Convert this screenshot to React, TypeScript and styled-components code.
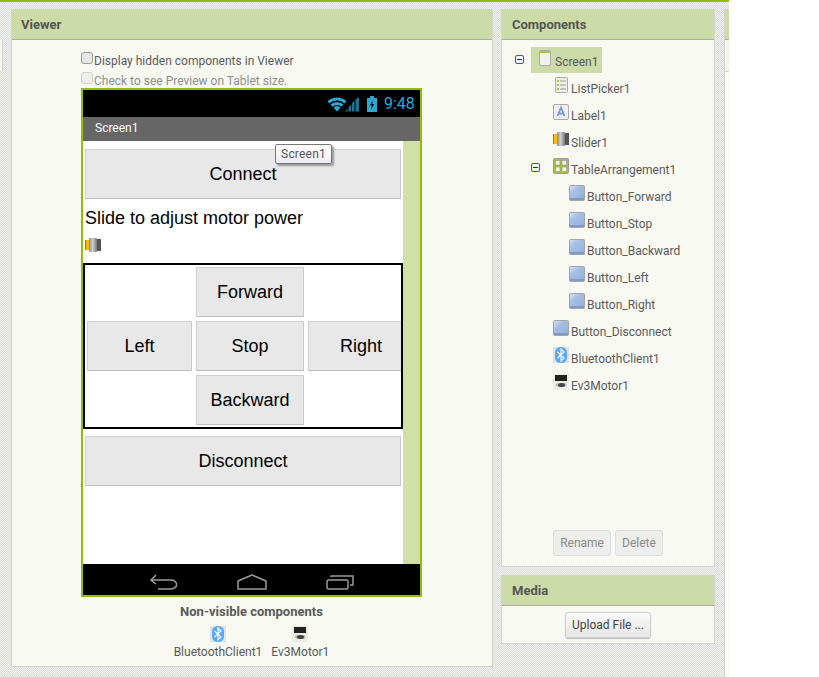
import React from "react";
import styled, { createGlobalStyle } from "styled-components";

const Global = createGlobalStyle`
  html, body { margin: 0; padding: 0; background: #fff; }
  body { font-family: Roboto, "Liberation Sans", sans-serif; overflow: hidden; }
`;

const Page = styled.div`
  width: 819px;
  height: 677px;
  overflow: hidden;
  background: #fff;
`;

const Workspace = styled.div`
  width: 729px;
  height: 677px;
  box-sizing: border-box;
  border-top: 2px solid #8fbf00;
  padding: 7px 0 0 0;
  display: flex;
  align-items: flex-start;
  gap: 8px;
  background-color: #f0f0ee;
  background-image: repeating-conic-gradient(#dcdcda 0 25%, #f1f1ef 0 50%);
  background-size: 2px 2px;
`;

const LeftEdge = styled.div`
  width: 3px;
  height: 31px;
  margin-top: 31px;
  flex: none;
  box-sizing: border-box;
  background: #f8f9f3;
  border-right: 1px solid #d4d4d0;
`;

const Panel = styled.section<{ $h: number; $w?: number }>`
  width: ${(p) => p.$w ?? 214}px;
  height: ${(p) => p.$h}px;
  flex: none;
  box-sizing: border-box;
  background: #f8f9f3;
  border: 1px solid #d4d4d0;
  border-top: none;
  display: flex;
  flex-direction: column;
`;

const PanelHeader = styled.h2<{ $inset?: number }>`
  margin: 0;
  height: 31px;
  flex: none;
  box-sizing: border-box;
  padding: 1px 0 0 ${(p) => p.$inset ?? 10}px;
  display: flex;
  align-items: center;
  background: #cddba9;
  border-bottom: 1px solid #a9b0a0;
  font-size: 13px;
  font-weight: 700;
  color: #555;
`;

const ViewerBody = styled.div`
  flex: 1;
  padding: 10px 0 0 69px;
  display: flex;
  flex-direction: column;
  width: 342px;
`;

const CheckRow = styled.label<{ $disabled?: boolean }>`
  display: flex;
  align-items: flex-start;
  height: 20px;
  font-size: 12px;
  line-height: 22px;
  color: ${(p) => (p.$disabled ? "#8e8e8e" : "#5a5a5a")};
`;

const CheckBox = styled.span<{ $disabled?: boolean }>`
  width: 12px;
  height: 12px;
  box-sizing: border-box;
  margin: 2px 1px 0 0;
  border: 1px solid ${(p) => (p.$disabled ? "#d0d0d0" : "#9a9a9a")};
  border-radius: 3px;
  background: ${(p) => (p.$disabled ? "#eeeeea" : "#e6e6e6")};
`;

const Phone = styled.div`
  position: relative;
  margin-top: -2px;
  width: 341px;
  height: 509px;
  box-sizing: border-box;
  border: 2px solid #8fbf00;
  display: flex;
  flex-direction: column;
  background: #fff;
`;

const StatusBar = styled.div`
  height: 27px;
  flex: none;
  box-sizing: border-box;
  background: #000;
  display: flex;
  align-items: center;
  justify-content: flex-end;
  padding-right: 6px;
  color: #2ea6d4;
  font-size: 16px;
  font-weight: 400;
`;

const StatusTime = styled.span`
  margin-left: 7px;
  width: 30px;
  text-align: right;
`;

const SignalWrap = styled.span`
  display: flex;
  margin-right: 7px;
`;

const TitleBar = styled.div`
  height: 24px;
  flex: none;
  box-sizing: border-box;
  background: #666;
  color: #fff;
  font-size: 12px;
  font-weight: 400;
  padding: 0 0 2px 12px;
  display: flex;
  align-items: center;
`;

const PhoneBody = styled.div`
  flex: 1;
  display: flex;
  min-height: 0;
`;

const Form = styled.div`
  width: 320px;
  flex: none;
  box-sizing: border-box;
  padding: 8px 2px 0;
  display: flex;
  flex-direction: column;
  font-family: "Liberation Sans", Arial, sans-serif;
  color: #000;
`;

const FormSide = styled.div`
  flex: 1;
  background: #d3e0a5;
`;

const PhoneButton = styled.div`
  height: 50px;
  box-sizing: border-box;
  background: #e8e8e8;
  border: 1px solid #d0d0d0;
  border-bottom-color: #bdbdbd;
  border-right-color: #c8c8c8;
  display: flex;
  align-items: center;
  justify-content: center;
  font-size: 18px;
  white-space: nowrap;
`;

const FormLabel = styled.div`
  margin-top: 8px;
  font-size: 18px;
  line-height: 22px;
`;

const SliderSlot = styled.div`
  display: flex;
  align-items: center;
  height: 32px;
`;

const Table = styled.div`
  margin: 2px -2px 7px;
  box-sizing: border-box;
  width: 320px;
  height: 166px;
  border: 2px solid #000;
  padding: 2px 0 2px 2px;
  display: grid;
  grid-template-columns: 105px 108px 106px;
  grid-template-rows: repeat(3, 50px);
  gap: 4px;
  overflow: hidden;
`;

const Cell = styled(PhoneButton)<{ $col: number; $row: number }>`
  grid-column: ${(p) => p.$col};
  grid-row: ${(p) => p.$row};
`;

const NavBar = styled.div`
  height: 31px;
  flex: none;
  box-sizing: border-box;
  background: #000;
  display: flex;
  align-items: center;
  padding: 4px 0 0 67px;
  gap: 59px;
`;

const NonVisible = styled.div`
  width: 341px;
  display: flex;
  flex-direction: column;
  align-items: center;
  padding-top: 8px;
  color: #5a5a5a;
`;

const NonVisibleTitle = styled.div`
  font-size: 13px;
  font-weight: 700;
  line-height: 14px;
`;

const NonVisibleList = styled.div`
  display: flex;
  gap: 9px;
  margin-top: 7px;
  font-size: 12px;
`;

const NonVisibleItem = styled.div`
  display: flex;
  flex-direction: column;
  align-items: center;
  line-height: 14px;
  gap: 3px;
`;

const RightColumn = styled.div`
  display: flex;
  flex-direction: column;
  gap: 8px;
  flex: none;
`;

const Tree = styled.div`
  flex: 1;
  padding-top: 7px;
`;

const TreeRow = styled.div<{ $depth: number }>`
  height: 27px;
  box-sizing: border-box;
  padding-left: ${(p) => 13 + p.$depth * 16}px;
  display: flex;
  align-items: flex-start;
`;

const ToggleSlot = styled.span`
  width: 16px;
  flex: none;
  height: 24px;
  display: flex;
  align-items: center;
`;

const Toggle = styled.span`
  width: 9px;
  height: 9px;
  box-sizing: border-box;
  border: 1px solid #3a50d0;
  border-radius: 2px;
  background: #f4f6ff;
  position: relative;
  &::after {
    content: "";
    position: absolute;
    left: 1px;
    right: 1px;
    top: 3px;
    height: 1px;
    background: #1c2a8c;
  }
`;

const TreeItem = styled.div<{ $selected?: boolean }>`
  height: 26px;
  box-sizing: border-box;
  padding: 3px 4px 0 6px;
  display: flex;
  align-items: flex-start;
  gap: 2px;
  background: ${(p) => (p.$selected ? "#cddba9" : "transparent")};
  font-size: 12px;
  line-height: 16px;
  color: #5a5a5a;
`;

const TreeText = styled.span`
  padding-top: 4px;
`;

const Actions = styled.div`
  display: flex;
  justify-content: center;
  gap: 4px;
  padding: 0 0 10px 0;
`;

const Btn = styled.button<{ $disabled?: boolean }>`
  font-family: Roboto, sans-serif;
  font-size: 12px;
  height: 26px;
  padding: 0 6px;
  border-radius: 3px;
  border: 1px solid ${(p) => (p.$disabled ? "#dcdcdc" : "#cfcfcf")};
  color: ${(p) => (p.$disabled ? "#8a8a8a" : "#444")};
  background: ${(p) => (p.$disabled ? "#eeeeec" : "linear-gradient(#fafafa, #e6e6e6)")};
  box-shadow: ${(p) => (p.$disabled ? "none" : "0 1px 1px #bbb")};
`;

const MediaBody = styled.div`
  display: flex;
  justify-content: center;
  padding-top: 6px;
`;

const Stub = styled.div`
  width: 5px;
  height: 668px;
  margin-left: 1px;
  flex: none;
  box-sizing: border-box;
  border-left: 1px solid #d4d4d0;
  background: #fafbf7;
  display: flex;
  flex-direction: column;
`;

const StubHeader = styled.div`
  height: 31px;
  background: #cddba9;
  border-bottom: 1px solid #a9b0a0;
  box-sizing: border-box;
`;

const StubBand = styled.div`
  height: 32px;
  background: #f2f4e8;
  border-bottom: 1px solid #d4d4d0;
  box-sizing: border-box;
`;

const Tooltip = styled.div`
  position: absolute;
  left: 192px;
  top: 54px;
  width: 57px;
  height: 20px;
  box-sizing: border-box;
  border: 1px solid #777;
  border-radius: 2px;
  background: linear-gradient(#fff, #ececf4);
  box-shadow: 2px 2px 2px #999;
  font-size: 12px;
  color: #555;
  text-align: center;
  line-height: 18px;
  letter-spacing: 0.2px;
`;

const ScreenIcon = () => (
  <svg width="16" height="16" viewBox="0 0 16 16">
    <rect x="2.5" y="0.5" width="11" height="15" rx="1.5" fill="#f0f0ec" stroke="#aaa" />
    <rect x="3" y="1" width="10" height="2" fill="#a9c13c" />
  </svg>
);
const ListIcon = () => (
  <svg width="16" height="16" viewBox="0 0 16 16">
    <rect x="2.5" y="0.5" width="12" height="15" rx="1" fill="#eeeeea" stroke="#aaa" />
    <rect x="4" y="3" width="2" height="2" fill="#a9c13c" />
    <rect x="4" y="7" width="2" height="2" fill="#a9c13c" />
    <rect x="4" y="11" width="2" height="2" fill="#a9c13c" />
    <path d="M7 4h6M7 8h6M7 12h6" stroke="#999" />
  </svg>
);
const LabelIcon = () => (
  <svg width="16" height="16" viewBox="0 0 16 16">
    <rect x="0.5" y="0.5" width="15" height="15" rx="1.5" fill="#eeeef2" stroke="#aaa" />
    <path d="M4.5 12 8 3.5 11.5 12M6 9.500h4" fill="none" stroke="#7a9ad6" strokeWidth="1.8" />
  </svg>
);
const SliderIcon = ({ id }: { id: string }) => (
  <svg width="16" height="16" viewBox="0 0 16 16">
    <defs>
      <linearGradient id={id} x1="0" x2="1" y1="0" y2="0">
        <stop offset="0" stopColor="#8a8a8a" />
        <stop offset="0.45" stopColor="#d0d0d0" />
        <stop offset="1" stopColor="#777" />
      </linearGradient>
    </defs>
    <rect x="0" y="3" width="5" height="10" fill="#fbb900" />
    <rect x="0" y="3" width="1" height="10" fill="#a87a00" />
    <rect x="11" y="2" width="5" height="12" fill="#555" />
    <rect x="4" y="1" width="8" height="14" rx="1" fill={`url(#${id})`} />
  </svg>
);
const TableIcon = () => (
  <svg width="16" height="16" viewBox="0 0 16 16">
    <rect x="0.5" y="0.5" width="15" height="15" rx="1" fill="#a9c13c" stroke="#9a9a9a" />
    <rect x="2.500" y="2.500" width="4.500" height="4.500" fill="#f2f2ee" stroke="#888" strokeWidth="0.5" />
    <rect x="9" y="2.500" width="4.500" height="4.500" fill="#f2f2ee" stroke="#888" strokeWidth="0.5" />
    <rect x="2.500" y="9" width="4.500" height="4.500" fill="#f2f2ee" stroke="#888" strokeWidth="0.5" />
    <rect x="9" y="9" width="4.500" height="4.500" fill="#f2f2ee" stroke="#888" strokeWidth="0.5" />
  </svg>
);
const ButtonIcon = ({ id }: { id: string }) => (
  <svg width="16" height="16" viewBox="0 0 16 16">
    <defs>
      <linearGradient id={id} x1="0" x2="1" y1="0" y2="1">
        <stop offset="0" stopColor="#d6e2f4" />
        <stop offset="0.35" stopColor="#a8c0e6" />
        <stop offset="1" stopColor="#94b0dc" />
      </linearGradient>
    </defs>
    <rect x="0" y="0" width="16" height="16" rx="2" fill="#a5a5a5" />
    <rect x="1" y="1" width="14" height="12" rx="1" fill={`url(#${id})`} />
    <rect x="1" y="13" width="14" height="2" fill="#7f99c9" />
  </svg>
);
const BluetoothIcon = () => (
  <svg width="16" height="16" viewBox="0 0 16 16">
    <rect width="16" height="16" fill="#e2e2de" />
    <rect x="2" y="0" width="12" height="16" rx="5.5" fill="#5aa9fb" />
    <path d="M4.500 5 11 11 8 14V2l3 3-6.500 6" fill="none" stroke="#fff" strokeWidth="1.1" />
  </svg>
);
const MotorIcon = () => (
  <svg width="16" height="16" viewBox="0 0 16 16">
    <rect width="16" height="16" fill="#ecece8" />
    <rect x="2" y="1" width="12" height="6" fill="#222" />
    <path d="M2 11 5 9h7l2 2-2 2H5z" fill="#bcbcbc" />
    <ellipse cx="8.500" cy="11" rx="3.500" ry="2" fill="#444" />
  </svg>
);
const SignalIcon = () => (
  <svg width="33" height="16" viewBox="0 0 33 16">
    <path d="M0.500 5.200a14 14 0 0 1 19 0l-2 2.200a11 11 0 0 0-15 0z" fill="#2ea6d4" />
    <path d="M3.500 8.500a9.500 9.500 0 0 1 13 0l-2 2.200a6.500 6.500 0 0 0-9 0z" fill="#2ea6d4" />
    <path d="M10 15.500 6.500 11.500a5.200 5.200 0 0 1 7 0z" fill="#2ea6d4" />
    <path d="M18 15.500h2.500v-3zM21.500 15.500H24V8.500l-2.500 3zM25 15.500h2.500V4.500L25 7.500zM28.500 15.500H32V1l-3.500 2.500z" fill="#1c7396" />
  </svg>
);
const BatteryIcon = () => (
  <svg width="10" height="16" viewBox="0 0 10 16">
    <rect x="3" y="0" width="4" height="2" fill="#2ea6d4" />
    <rect x="0" y="2" width="10" height="14" fill="#2ea6d4" />
    <path d="M6 4 3 9.500h2L4 14 7 8H5z" fill="#000" />
  </svg>
);
const BackIcon = () => (
  <svg width="28" height="16" viewBox="0 0 28 16">
    <path d="M1 6h20a5 4 0 0 1 0 9H8M6 1 1 6l5 4" fill="none" stroke="#9a9a9a" strokeWidth="1.500" />
  </svg>
);
const HomeIcon = () => (
  <svg width="30" height="16" viewBox="0 0 30 16">
    <path d="M1 7 15 1l14 6v8H1z" fill="none" stroke="#9a9a9a" strokeWidth="1.500" strokeLinejoin="round" />
  </svg>
);
const RecentIcon = () => (
  <svg width="28" height="16" viewBox="0 0 28 16">
    <rect x="1" y="6" width="21" height="9" rx="1.500" fill="none" stroke="#9a9a9a" strokeWidth="1.500" />
    <path d="M5 3V2h22v9h-3" fill="none" stroke="#9a9a9a" strokeWidth="1.500" />
  </svg>
);

type Node = { name: string; depth: number; icon: React.ReactNode; toggle?: boolean; selected?: boolean };

const nodes: Node[] = [
  { name: "Screen1", depth: 0, icon: <ScreenIcon />, toggle: true, selected: true },
  { name: "ListPicker1", depth: 1, icon: <ListIcon /> },
  { name: "Label1", depth: 1, icon: <LabelIcon /> },
  { name: "Slider1", depth: 1, icon: <SliderIcon id="s2" /> },
  { name: "TableArrangement1", depth: 1, icon: <TableIcon />, toggle: true },
  { name: "Button_Forward", depth: 2, icon: <ButtonIcon id="b1" /> },
  { name: "Button_Stop", depth: 2, icon: <ButtonIcon id="b2" /> },
  { name: "Button_Backward", depth: 2, icon: <ButtonIcon id="b3" /> },
  { name: "Button_Left", depth: 2, icon: <ButtonIcon id="b4" /> },
  { name: "Button_Right", depth: 2, icon: <ButtonIcon id="b5" /> },
  { name: "Button_Disconnect", depth: 1, icon: <ButtonIcon id="b6" /> },
  { name: "BluetoothClient1", depth: 1, icon: <BluetoothIcon /> },
  { name: "Ev3Motor1", depth: 1, icon: <MotorIcon /> },
];

export default function App() {
  return (
    <Page>
      <Global />
      <Workspace>
        <LeftEdge />
        <Panel $w={482} $h={658}>
          <PanelHeader $inset={9}>Viewer</PanelHeader>
          <ViewerBody>
            <CheckRow>
              <CheckBox />
              Display hidden components in Viewer
            </CheckRow>
            <CheckRow $disabled>
              <CheckBox $disabled />
              Check to see Preview on Tablet size.
            </CheckRow>
            <Phone>
              <StatusBar>
                <SignalWrap>
                  <SignalIcon />
                </SignalWrap>
                <BatteryIcon />
                <StatusTime>9:48</StatusTime>
              </StatusBar>
              <TitleBar>Screen1</TitleBar>
              <PhoneBody>
                <Form>
                  <PhoneButton>Connect</PhoneButton>
                  <FormLabel>Slide to adjust motor power</FormLabel>
                  <SliderSlot>
                    <SliderIcon id="s1" />
                  </SliderSlot>
                  <Table>
                    <Cell $col={2} $row={1}>Forward</Cell>
                    <Cell $col={1} $row={2}>Left</Cell>
                    <Cell $col={2} $row={2}>Stop</Cell>
                    <Cell $col={3} $row={2}>Right</Cell>
                    <Cell $col={2} $row={3}>Backward</Cell>
                  </Table>
                  <PhoneButton>Disconnect</PhoneButton>
                </Form>
                <FormSide />
              </PhoneBody>
              <NavBar>
                <BackIcon />
                <HomeIcon />
                <RecentIcon />
              </NavBar>
              <Tooltip>Screen1</Tooltip>
            </Phone>
            <NonVisible>
              <NonVisibleTitle>Non-visible components</NonVisibleTitle>
              <NonVisibleList>
                <NonVisibleItem>
                  <BluetoothIcon />
                  BluetoothClient1
                </NonVisibleItem>
                <NonVisibleItem>
                  <MotorIcon />
                  Ev3Motor1
                </NonVisibleItem>
              </NonVisibleList>
            </NonVisible>
          </ViewerBody>
        </Panel>
        <RightColumn>
          <Panel $h={558}>
            <PanelHeader>Components</PanelHeader>
            <Tree>
              {nodes.map((n) => (
                <TreeRow key={n.name} $depth={n.depth}>
                  <ToggleSlot>{n.toggle && <Toggle />}</ToggleSlot>
                  <TreeItem $selected={n.selected}>
                    {n.icon}
                    <TreeText>{n.name}</TreeText>
                  </TreeItem>
                </TreeRow>
              ))}
            </Tree>
            <Actions>
              <Btn $disabled>Rename</Btn>
              <Btn $disabled>Delete</Btn>
            </Actions>
          </Panel>
          <Panel $h={69}>
            <PanelHeader>Media</PanelHeader>
            <MediaBody>
              <Btn>Upload File ...</Btn>
            </MediaBody>
          </Panel>
        </RightColumn>
        <Stub>
          <StubHeader />
          <StubBand />
        </Stub>
      </Workspace>
    </Page>
  );
}
